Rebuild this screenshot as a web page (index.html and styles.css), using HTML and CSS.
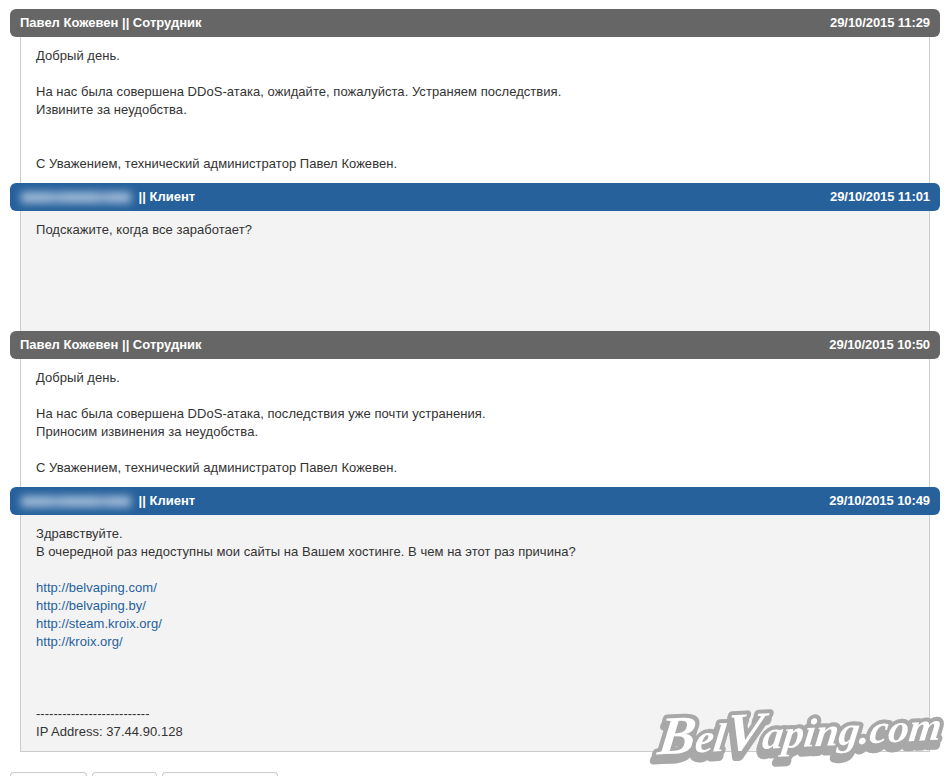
FILE: index.html
```html
<!DOCTYPE html>
<html lang="en">
<head>
    <meta charset="UTF-8">
    <meta name="viewport" content="width=device-width, initial-scale=1.0">
    <title>Ticket</title>
    <link rel="stylesheet" href="styles.css">
</head>
<body>

    <div class="reply-header staff">
        <span>Павел Кожевен || Сотрудник</span>
        <span class="reply-date">29/10/2015 11:29</span>
    </div>
    <div class="reply-body">
        Добрый день.<br>
        <br>
        На нас была совершена DDoS-атака, ожидайте, пожалуйста. Устраняем последствия.<br>
        Извините за неудобства.<br>
        <br>
        <br>
        С Уважением, технический администратор Павел Кожевен.
    </div>

    <div class="reply-header client">
        <span class="client-name"><span class="blurred"></span> || Клиент</span>
        <span class="reply-date">29/10/2015 11:01</span>
    </div>
    <div class="reply-body client-body short">
        Подскажите, когда все заработает?
    </div>

    <div class="reply-header staff">
        <span>Павел Кожевен || Сотрудник</span>
        <span class="reply-date">29/10/2015 10:50</span>
    </div>
    <div class="reply-body">
        Добрый день.<br>
        <br>
        На нас была совершена DDoS-атака, последствия уже почти устранения.<br>
        Приносим извинения за неудобства.<br>
        <br>
        С Уважением, технический администратор Павел Кожевен.
    </div>

    <div class="reply-header client">
        <span class="client-name"><span class="blurred"></span> || Клиент</span>
        <span class="reply-date">29/10/2015 10:49</span>
    </div>
    <div class="reply-body client-body last">
        Здравствуйте.<br>
        В очередной раз недоступны мои сайты на Вашем хостинге. В чем на этот раз причина?<br>
        <br>
        <a href="#">http://belvaping.com/</a><br>
        <a href="#">http://belvaping.by/</a><br>
        <a href="#">http://steam.kroix.org/</a><br>
        <a href="#">http://kroix.org/</a><br>
        <br>
        <br>
        <br>
        --------------------------<br>
        IP Address: 37.44.90.128
    </div>

    <div class="tabs">
        <div class="tab tab-1"></div>
        <div class="tab tab-2"></div>
        <div class="tab tab-3"></div>
    </div>

    <svg class="watermark" width="312" height="76" viewBox="0 0 312 76">
        <text class="wm-text" x="26" y="54" transform="rotate(-3 26 54) skewX(-10)" textLength="284" lengthAdjust="spacingAndGlyphs"><tspan class="wm-cap">B</tspan>el<tspan class="wm-cap">V</tspan>aping.com</text>
    </svg>

</body>
</html>
```

FILE: styles.css
```css
html, body {
    height: 776px;
    overflow: hidden;
}
body {
    position: relative;
    margin: 0;
    padding: 9px 12px 0 10px;
    font-family: "Liberation Sans", Arial, sans-serif;
    font-size: 13px;
    line-height: 18px;
    color: #333;
    background-color: #fff;
    box-sizing: border-box;
}
a {
    color: #26619c;
    text-decoration: none;
}
.reply-header {
    display: flex;
    justify-content: space-between;
    align-items: center;
    height: 28px;
    padding: 0 10px;
    border-radius: 6px;
    color: #fff;
    font-weight: bold;
}
.reply-date {
    letter-spacing: -0.08px;
}
.staff {
    background-color: #666;
}
.client {
    background-color: #26619c;
}
.client-name {
    display: flex;
    align-items: center;
    gap: 3px;
    white-space: pre;
}
.blurred {
    display: block;
    width: 110px;
    height: 11px;
    margin-left: 1px;
    margin-right: 1px;
    background: linear-gradient(90deg, #a3bdd9 0, #a3bdd9 24%, #8fadce 32%, #a3bdd9 40%, #a3bdd9 66%, #8fadce 74%, #a3bdd9 82%);
    filter: blur(4px);
}
.reply-body {
    margin: 0 10px;
    padding: 10px 15px;
    border: solid #ccc;
    border-width: 0 1px;
    letter-spacing: 0.04px;
}
.client-body {
    background-color: #f3f3f3;
}
.short {
    height: 120px;
    box-sizing: border-box;
}
.last {
    border-bottom-width: 1px;
}
.tabs {
    display: flex;
    gap: 5px;
    margin-top: 20px;
}
.tab {
    height: 10px;
    border: 1px solid #ccc;
    border-bottom: none;
    border-radius: 4px 4px 0 0;
    box-sizing: border-box;
}
.tab-1 {
    width: 77px;
}
.tab-2 {
    width: 65px;
}
.tab-3 {
    width: 116px;
}
.watermark {
    position: absolute;
    left: 640px;
    top: 700px;
    filter: drop-shadow(-2px 6px 0 #a8a8a8);
}
.wm-text {
    font-family: "Liberation Serif", serif;
    font-size: 40px;
    font-weight: bold;
    font-style: italic;
    fill: #fff;
    stroke: #a8a8a8;
    stroke-width: 8px;
    stroke-linejoin: round;
    paint-order: stroke;
}
.wm-cap {
    font-size: 54px;
}
```
